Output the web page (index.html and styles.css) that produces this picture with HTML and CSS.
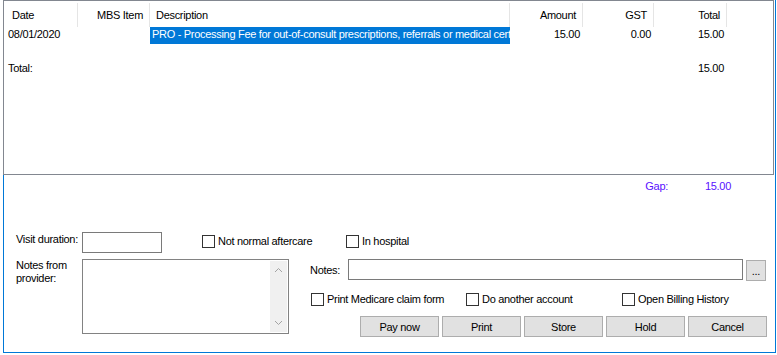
FILE: index.html
```html
<!DOCTYPE html>
<html lang="en">
<head>
    <meta charset="UTF-8">
    <title>Billing</title>
    <link rel="stylesheet" href="styles.css">
</head>
<body>

    <div class="frame">
        <div class="listBox">
            <div class="listRow listHead">
                <div class="cell">Date</div>
                <div class="cell right">MBS Item</div>
                <div class="cell">Description</div>
                <div class="cell right">Amount</div>
                <div class="cell right">GST</div>
                <div class="cell right">Total</div>
            </div>
            <div class="listRow">
                <div class="cell first">08/01/2020</div>
                <div class="cell right"></div>
                <div class="cell selected">PRO - Processing Fee for out-of-consult prescriptions, referrals or medical certificates</div>
                <div class="cell right">15.00</div>
                <div class="cell right">0.00</div>
                <div class="cell right">15.00</div>
            </div>
            <div class="listRow"></div>
            <div class="listRow">
                <div class="cell first">Total:</div>
                <div class="cell"></div>
                <div class="cell"></div>
                <div class="cell"></div>
                <div class="cell"></div>
                <div class="cell right">15.00</div>
            </div>
        </div>

        <div class="gapRow">
            <span class="gapLabel">Gap:</span>
            <span class="gapValue">15.00</span>
        </div>

        <div class="visitRow">
            <div class="fieldLabel">Visit duration:</div>
            <div class="textBox visitBox"></div>
            <label class="check checkAftercare"><span class="box"></span>Not normal aftercare</label>
            <label class="check"><span class="box"></span>In hospital</label>
        </div>

        <div class="mainRow">
            <div class="fieldLabel twoLine">Notes from<br>provider:</div>
            <div class="textArea">
                <div class="scrollBar">
                    <svg width="9" height="6" viewBox="0 0 9 6"><path d="M1 5 L4.5 1.5 L8 5" fill="none" stroke="#a3a3a3" stroke-width="1"/></svg>
                    <svg width="9" height="6" viewBox="0 0 9 6"><path d="M1 1 L4.5 4.5 L8 1" fill="none" stroke="#a3a3a3" stroke-width="1"/></svg>
                </div>
            </div>

            <div class="rightCol">
                <div class="notesRow">
                    <div class="notesLabel">Notes:</div>
                    <div class="textBox notesBox"></div>
                    <div class="button dots">...</div>
                </div>
                <div class="checkRow">
                    <label class="check checkMedicare"><span class="box"></span>Print Medicare claim form</label>
                    <label class="check checkAnother"><span class="box"></span>Do another account</label>
                    <label class="check"><span class="box"></span>Open Billing History</label>
                </div>
                <div class="buttonRow">
                    <div class="button">Pay now</div>
                    <div class="button">Print</div>
                    <div class="button">Store</div>
                    <div class="button">Hold</div>
                    <div class="button">Cancel</div>
                </div>
            </div>
        </div>
    </div>

</body>
</html>
```

FILE: styles.css
```css
body{
    margin: 0;
    background-color: #fff;
    font-family: "Liberation Sans", Arial, sans-serif;
    font-size: 11px;
    letter-spacing: -0.3px;
    color: #000;
}

.frame{
    margin-left: 3px;
    width: 773px;
    height: 353px;
    box-sizing: border-box;
    border-left: 1px solid #0078d7;
    border-right: 1px solid #0078d7;
    border-bottom: 1px solid #0078d7;
}

.listBox{
    margin-left: -1px;
    width: 771px;
    height: 175px;
    box-sizing: border-box;
    border: 1px solid #828790;
    overflow: hidden;
}

.listRow{
    display: grid;
    grid-template-columns: 74px 72px 360px 73px 71px 73px 1fr;
    height: 17px;
    line-height: 14px;
}

.cell{
    padding: 0 3px;
    white-space: nowrap;
    overflow: hidden;
}

.cell.first{
    padding-left: 4px;
}

.right{
    text-align: right;
}

.selected{
    padding-left: 2px;
    background-color: #0078d7;
    color: #fff;
}

.listHead{
    height: 26px;
    line-height: 14px;
}

.listHead .cell{
    margin-top: 2px;
    padding: 5px 6px 0 6px;
    border-right: 1px solid #e5e5e5;
}

.listHead .cell:first-child{
    padding-left: 8px;
}

.gapRow{
    display: flex;
    justify-content: flex-end;
    height: 24px;
    padding-top: 4px;
    padding-right: 44px;
    box-sizing: border-box;
    line-height: 14px;
    color: #5a10ff;
}

.gapValue{
    width: 63px;
    text-align: right;
}

.visitRow{
    display: flex;
    align-items: flex-start;
    margin-top: 33px;
    padding-left: 12px;
    height: 21px;
}

.fieldLabel{
    width: 66px;
    line-height: 14px;
}

.fieldLabel.twoLine{
    line-height: 13px;
}

.textBox{
    height: 21px;
    box-sizing: border-box;
    border: 1px solid #7a7a7a;
    background-color: #fff;
}

.visitBox{
    width: 80px;
}

.check{
    display: flex;
    align-items: center;
    gap: 3px;
    margin-top: 2px;
    line-height: 14px;
}

.box{
    width: 13px;
    height: 13px;
    box-sizing: border-box;
    border: 1px solid #333;
    background-color: #fff;
}

.checkAftercare{
    margin-left: 40px;
    width: 144px;
}

.mainRow{
    display: flex;
    align-items: flex-start;
    margin-top: 6px;
    padding-left: 12px;
}

.textArea{
    display: flex;
    justify-content: flex-end;
    width: 207px;
    height: 75px;
    box-sizing: border-box;
    border: 1px solid #828282;
    padding: 1px;
}

.scrollBar{
    display: flex;
    flex-direction: column;
    justify-content: space-between;
    align-items: center;
    width: 17px;
    padding: 6px 0;
    box-sizing: border-box;
    background-color: #f0f0f0;
}

.rightCol{
    margin-left: 21px;
    width: 457px;
}

.notesRow{
    display: flex;
    align-items: flex-start;
}

.notesLabel{
    width: 38px;
    padding-top: 4px;
    line-height: 14px;
}

.notesBox{
    width: 395px;
}

.button{
    display: flex;
    align-items: center;
    justify-content: center;
    height: 21px;
    box-sizing: border-box;
    border: 1px solid #adadad;
    background-color: #e1e1e1;
}

.dots{
    width: 20px;
    margin-top: 1px;
    margin-left: 3px;
    align-items: flex-end;
    padding-bottom: 3px;
    line-height: 11px;
}

.checkRow{
    display: flex;
    margin-top: 11px;
    padding-left: 1px;
}

.checkRow .check{
    margin-top: 0;
}

.checkMedicare{
    width: 155px;
}

.checkAnother{
    width: 156px;
}

.buttonRow{
    display: flex;
    justify-content: flex-end;
    gap: 3px;
    margin-top: 10px;
}

.buttonRow .button{
    width: 79px;
}
```
